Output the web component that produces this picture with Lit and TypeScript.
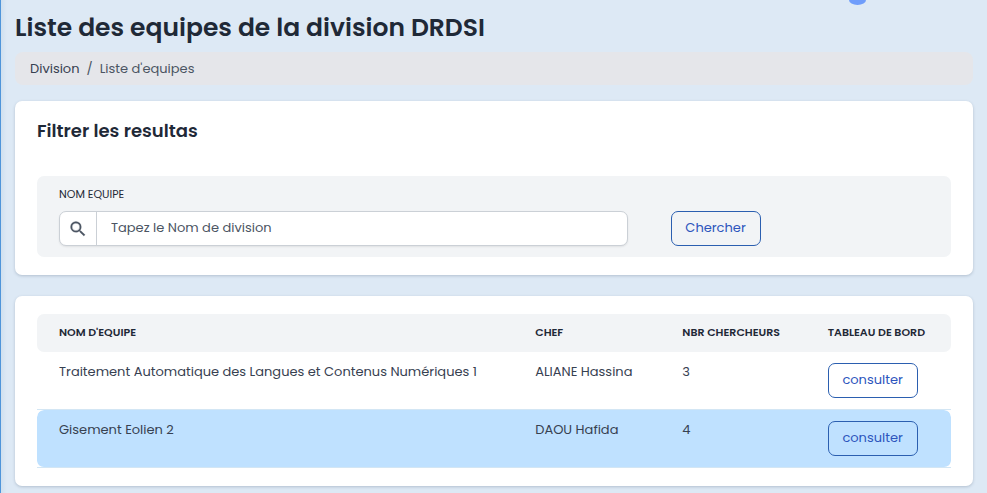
import { LitElement, html, css } from "lit";
import { customElement, property } from "lit/decorators.js";

interface Team {
  name: string;
  head: string;
  members: number;
  active?: boolean;
}

@customElement("app-root")
export class AppRoot extends LitElement {
  @property({ attribute: false })
  teams: Team[] = [
    { name: "Traitement Automatique des Langues et Contenus Numériques 1", head: "ALIANE Hassina", members: 3 },
    { name: "Gisement Eolien 2", head: "DAOU Hafida", members: 4, active: true },
  ];

  static styles = css`
    :host {
      display: block;
      position: relative;
      box-sizing: border-box;
      min-height: 100vh;
      overflow: hidden;
      padding: 12px 14px 7px 14px;
      border-left: 1px solid #4f95da;
      background: linear-gradient(to right, #d0e0ef, #dde9f5 6px);
      color: #1f2937;
      font-family: Poppins, Inter, sans-serif;
      font-size: 13px;
      line-height: 20px;
    }
    * {
      box-sizing: border-box;
    }
    .dot {
      position: absolute;
      top: -5px;
      right: 121px;
      width: 17px;
      height: 10px;
      border-radius: 50%;
      background: #6f9dfb;
    }
    .title {
      margin: 0 0 8px;
      font-size: 25px;
      line-height: 32px;
      font-weight: 600;
    }
    .crumbs {
      display: flex;
      gap: 7px;
      margin: 0 0 16px;
      padding: 7px 15px 6px;
      border-radius: 8px;
      background: #e5e6ea;
      color: #4b5563;
      list-style: none;
    }
    .crumb-link {
      color: #374151;
      text-decoration: none;
    }
    .card {
      padding: 18px 22px;
      margin-bottom: 21px;
      border-radius: 7px;
      background: #fff;
      box-shadow: 0 1px 3px rgba(50, 70, 100, 0.25);
    }
    .card:last-child {
      margin-bottom: 0;
    }
    .subtitle {
      margin: 0 0 33px;
      font-size: 18px;
      line-height: 24px;
      font-weight: 600;
    }
    .filter {
      display: grid;
      grid-template-columns: 11fr 5fr;
      column-gap: 43px;
      align-items: end;
      padding: 11px 22px;
      border-radius: 7px;
      background: #f2f4f6;
    }
    .label {
      display: block;
      margin-bottom: 10px;
      font-size: 11px;
      line-height: 14px;
    }
    .group {
      display: flex;
      height: 35px;
      overflow: hidden;
      border: 1px solid #cbd0d6;
      border-radius: 7px;
      background: #fff;
      box-shadow: 0 1px 2px rgba(0, 0, 0, 0.08);
    }
    .icon {
      display: flex;
      flex: none;
      align-items: center;
      justify-content: center;
      width: 37px;
      border-right: 1px solid #cbd0d6;
      color: #4b5563;
    }
    .glyph {
      display: block;
      stroke: currentColor;
      stroke-width: 0.3;
    }
    .field {
      flex: 1;
      min-width: 0;
      padding: 0 14px 2px;
      border: 0;
      outline: 0;
      background: transparent;
      color: #374151;
      font: inherit;
    }
    .field::placeholder {
      color: #4b5563;
      opacity: 1;
    }
    .button {
      display: block;
      width: 90px;
      height: 35px;
      padding: 0 0 2px;
      border: 1px solid #2b5fb0;
      border-radius: 7px;
      background: transparent;
      color: #2d55bd;
      font: inherit;
      cursor: pointer;
    }
    .table {
      width: 100%;
      table-layout: fixed;
      border-collapse: separate;
      border-spacing: 0;
    }
    .head {
      height: 38px;
      padding: 0 0 2px 22px;
      background: #f2f4f6;
      font-size: 11px;
      line-height: 16px;
      font-weight: 600;
      text-align: left;
      white-space: nowrap;
    }
    .col-name {
      width: 52.1%;
    }
    .col-chef {
      width: 16.1%;
    }
    .row {
      box-shadow: inset 0 -1px #d3e6f4;
    }
    .cell {
      height: 58px;
      padding: 11px 0 11px 22px;
      border-bottom: 1px solid transparent;
      background-clip: padding-box;
      color: #374151;
      line-height: 18px;
      vertical-align: top;
    }
    .head:first-child {
      border-radius: 7px 0 0 7px;
    }
    .head:last-child {
      border-radius: 0 7px 7px 0;
    }
    .active .cell {
      background-color: #bfe1ff;
    }
    .active .cell:first-child {
      border-radius: 7px 0 0 7px;
    }
    .active .cell:last-child {
      border-radius: 0 7px 7px 0;
    }
  `;

  render() {
    return html`
      <span class="dot"></span>
      <h1 class="title">Liste des equipes de la division DRDSI</h1>
      <ol class="crumbs">
        <li><a class="crumb-link" href="#">Division</a></li>
        <li>/</li>
        <li>Liste d'equipes</li>
      </ol>
      <section class="card">
        <h2 class="subtitle">Filtrer les resultas</h2>
        <form class="filter" @submit=${(e: Event) => e.preventDefault()}>
          <div>
            <label class="label" for="name">NOM EQUIPE</label>
            <div class="group">
              <span class="icon">
                <svg class="glyph" width="20" height="20" viewBox="0 0 24 24" fill="currentColor" aria-hidden="true">
                  <path d="M15.5 14h-.79l-.28-.27A6.47 6.47 0 0 0 16 9.5 6.5 6.5 0 1 0 9.5 16c1.61 0 3.09-.59 4.23-1.57l.27.28v.79l5 4.99L20.49 19l-4.99-5zm-6 0A4.5 4.5 0 1 1 14 9.5 4.5 4.5 0 0 1 9.5 14z" />
                </svg>
              </span>
              <input class="field" id="name" type="text" placeholder="Tapez le Nom de division" />
            </div>
          </div>
          <button class="button" type="submit">Chercher</button>
        </form>
      </section>
      <section class="card">
        <table class="table">
          <thead>
            <tr>
              <th class="head col-name" scope="col">NOM D'EQUIPE</th>
              <th class="head col-chef" scope="col">CHEF</th>
              <th class="head" scope="col">NBR CHERCHEURS</th>
              <th class="head" scope="col">TABLEAU DE BORD</th>
            </tr>
          </thead>
          <tbody>
            ${this.teams.map(
              (t) => html`
                <tr class=${t.active ? "row active" : "row"}>
                  <td class="cell">${t.name}</td>
                  <td class="cell">${t.head}</td>
                  <td class="cell">${t.members}</td>
                  <td class="cell"><button class="button" type="button">consulter</button></td>
                </tr>
              `
            )}
          </tbody>
        </table>
      </section>
    `;
  }
}
